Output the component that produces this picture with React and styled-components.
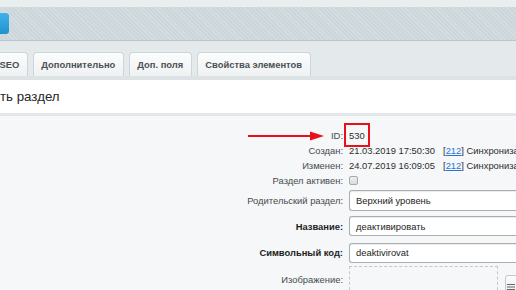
import React from "react";
import styled, { createGlobalStyle } from "styled-components";

const Global = createGlobalStyle`
  html, body { margin: 0; padding: 0; }
  body {
    width: 516px; height: 290px; overflow: hidden;
    background: #f5f7f8;
    font-family: Arial, "Liberation Sans", sans-serif;
  }
`;

const Page = styled.div`
  width: 516px;
  height: 290px;
  overflow: hidden;
  display: flex;
  flex-direction: column;
  background: #f5f7f8;
  & > * { flex: none; }
`;

const TopStrip = styled.div`
  height: 7px;
  background: #e9eeee;
`;

const Toolbar = styled.div`
  height: 33px;
  background-color: #cdd6da;
  background-image: repeating-linear-gradient(45deg, rgba(255,255,255,0.2) 0 1px, transparent 1px 3px);
  border-bottom: 1px solid #bcc6ca;
  display: flex;
  align-items: center;
`;

const BlueButton = styled.div`
  width: 9px;
  height: 21px;
  background: linear-gradient(#40b3e8, #1f93cf);
  border-radius: 0 3px 3px 0;
`;

const TabBar = styled.div`
  height: 35px;
  background: #e4e9ec;
  display: flex;
  align-items: flex-end;
  gap: 5px;
  border-bottom: 4px solid #dde2e4;
`;

const Tab = styled.div`
  height: 23px;
  line-height: 23px;
  padding: 0 7.5px;
  margin-left: ${(p) => p.$offset || 0}px;
  border: 1px solid #cfd5d8;
  border-bottom: none;
  border-radius: 4px 4px 0 0;
  background: linear-gradient(#fcfdfd, #eef1f2);
  font-weight: bold;
  font-size: 9.4px;
  color: #4a5155;
  white-space: nowrap;
`;

const Header = styled.div`
  height: 33px;
  background: #ffffff;
  border-bottom: 3px solid #e3e7e9;
  display: flex;
  align-items: center;
`;

const Title = styled.h1`
  margin: 0;
  font-weight: normal;
  font-size: 13.3px;
  color: #262626;
`;

const Form = styled.div`
  flex: 1;
  padding-top: 12px;
  display: flex;
  flex-direction: column;
`;

const Row = styled.div`
  display: flex;
  align-items: ${(p) => (p.$top ? "flex-start" : "center")};
  height: ${(p) => p.$h}px;
  gap: 6px;
  flex: none;
`;

const Label = styled.div`
  position: relative;
  width: 343px;
  flex: none;
  text-align: right;
  font-size: 9.4px;
  color: ${(p) => (p.$bold ? "#1e1e1e" : "#474c4f")};
  font-weight: ${(p) => (p.$bold ? "bold" : "normal")};
  white-space: nowrap;
  ${(p) => (p.$top ? "padding-top: 8px;" : "")}
`;

const Value = styled.div`
  display: flex;
  align-items: center;
  font-size: 9.4px;
  color: #2e2e2e;
  white-space: nowrap;
`;

const Highlight = styled.span`
  border: 2px solid #e8101a;
  padding: 5px 3px 4px 3px;
  margin: -7px -5px -6px -5px;
`;

const Arrow = styled.svg`
  position: absolute;
  right: 19px;
  top: 50%;
  margin-top: -6px;
`;

const Gap = styled.span`
  display: inline-block;
  width: ${(p) => p.$w}px;
`;

const Link = styled.a`
  color: #2675d7;
  text-decoration: underline;
`;

const Checkbox = styled.span`
  width: 9px;
  height: 9px;
  border: 1px solid #a4abae;
  border-radius: 2px;
  background: linear-gradient(#eef0f1, #d8dcde);
  box-sizing: border-box;
`;

const Input = styled.div`
  width: 180px;
  height: ${(p) => p.$h || 20}px;
  box-sizing: border-box;
  border: 1px solid #a7afb3;
  border-right: none;
  border-radius: 3px 0 0 3px;
  background: #fff;
  box-shadow: inset 0 1px 1px rgba(0,0,0,0.08);
  padding: 0 6px;
  display: flex;
  align-items: center;
  font-size: 9.4px;
  color: #1e1e1e;
`;

const DropBox = styled.div`
  width: 149px;
  height: 40px;
  box-sizing: border-box;
  border: 1px dashed #c3c8cb;
`;

const MenuButton = styled.div`
  width: 16px;
  height: 24px;
  margin-left: 7px;
  margin-top: 1px;
  border: 1px solid #c4cacd;
  border-radius: 3px;
  background: linear-gradient(#fbfcfc, #e6eaeb);
  display: flex;
  align-items: center;
  justify-content: center;
  box-sizing: border-box;
  padding-right: 4px;
`;

export default function App() {
  return (
    <>
      <Global />
      <Page>
        <TopStrip />
        <Toolbar>
          <BlueButton />
        </Toolbar>
        <TabBar>
          <Tab $offset={-9}>SEO</Tab>
          <Tab>Дополнительно</Tab>
          <Tab>Доп. поля</Tab>
          <Tab>Свойства элементов</Tab>
        </TabBar>
        <Header>
          <Title>ть раздел</Title>
        </Header>
        <Form>
          <Row $h={15}>
            <Label>
              <Arrow width="76" height="12" viewBox="0 0 76 12">
                <line x1="0" y1="6" x2="64" y2="6" stroke="#e8101a" strokeWidth="2" />
                <polygon points="62,1.5 76,6 62,10.5" fill="#e8101a" />
              </Arrow>
              ID:
            </Label>
            <Value>
              <Highlight>530</Highlight>
            </Value>
          </Row>
          <Row $h={15}>
            <Label>Создан:</Label>
            <Value>
              21.03.2019 17:50:30<Gap $w={8} />[<Link>212</Link>] Синхронизация
            </Value>
          </Row>
          <Row $h={15}>
            <Label>Изменен:</Label>
            <Value>
              24.07.2019 16:09:05<Gap $w={8} />[<Link>212</Link>] Синхронизация
            </Value>
          </Row>
          <Row $h={15}>
            <Label>Раздел активен:</Label>
            <Value>
              <Checkbox />
            </Value>
          </Row>
          <Row $h={25}>
            <Label>Родительский раздел:</Label>
            <Value>
              <Input $h={21}>Верхний уровень</Input>
            </Value>
          </Row>
          <Row $h={26}>
            <Label $bold>Название:</Label>
            <Value>
              <Input>деактивировать</Input>
            </Value>
          </Row>
          <Row $h={27}>
            <Label $bold>Символьный код:</Label>
            <Value>
              <Input>deaktivirovat</Input>
            </Value>
          </Row>
          <Row $h={40} $top>
            <Label $top>Изображение:</Label>
            <Value>
              <DropBox />
              <MenuButton>
                <svg width="8" height="8" viewBox="0 0 8 8">
                  <rect x="0" y="1" width="8" height="1" fill="#666" />
                  <rect x="0" y="3.5" width="8" height="1" fill="#666" />
                  <rect x="0" y="6" width="8" height="1" fill="#666" />
                </svg>
              </MenuButton>
            </Value>
          </Row>
        </Form>
      </Page>
    </>
  );
}
